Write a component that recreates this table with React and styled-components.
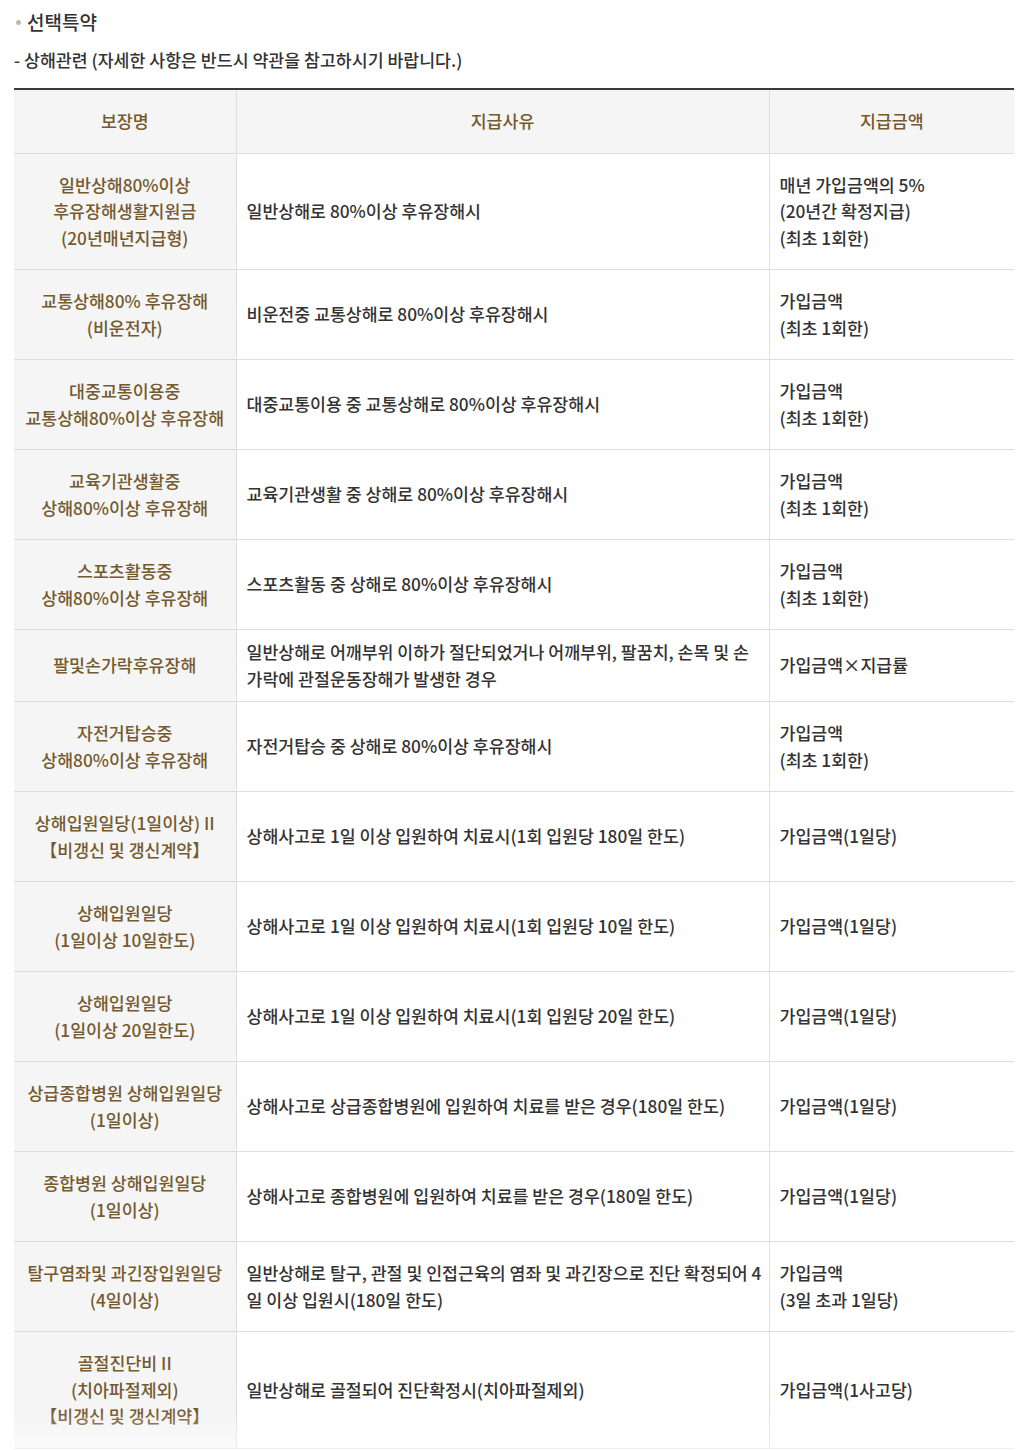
import React from "react";
import styled, { createGlobalStyle } from "styled-components";

const GlobalStyle = createGlobalStyle`
  html, body { margin: 0; padding: 0; background: #fff; }
  body {
    font-family: "Noto Sans CJK KR", "Noto Sans", sans-serif;
    color: #333;
  }
`;

const Page = styled.div`
  width: 1000px;
  margin-left: 14px;
  padding-top: 8px;
`;

const Title = styled.h3`
  margin: 0;
  display: flex;
  align-items: center;
  gap: 6px;
  font-size: 19px;
  line-height: 28px;
  font-weight: 500;
  color: #333;
  &::before {
    content: "";
    width: 5px;
    height: 5px;
    border-radius: 50%;
    background: #c3b9ab;
    margin-left: 2px;
  }
`;

const Sub = styled.p`
  margin: 11px 0 15px;
  font-size: 17.3px;
  line-height: 26px;
  font-weight: 500;
  color: #333;
`;

const Table = styled.table`
  width: 1000px;
  border-collapse: collapse;
  table-layout: fixed;
  border-top: 2px solid #3a3a3a;
  font-size: 17.3px;
  line-height: 26.5px;
  font-weight: 500;
`;

const Th = styled.th`
  background: #f5f5f5;
  color: #745a2e;
  font-weight: 500;
  text-align: center;
  padding: 18px 2px;
  border-bottom: 1px solid #dedede;
  border-right: 1px solid #dedede;
  &:last-child { border-right: none; }
  white-space: nowrap;
`;

const Td = styled.td`
  color: #333;
  text-align: left;
  padding: 9px 10px;
  border-bottom: 1px solid #dedede;
  border-right: 1px solid #dedede;
  &:last-child { border-right: none; }
  vertical-align: middle;
  white-space: nowrap;
`;

const Fade = styled.div`
  position: fixed;
  left: 0;
  right: 0;
  bottom: 0;
  height: 40px;
  background: linear-gradient(rgba(255,255,255,0), rgba(255,255,255,0.55));
  pointer-events: none;
`;

const rows = [
  [["일반상해80%이상", "후유장해생활지원금", "(20년매년지급형)"], ["일반상해로 80%이상 후유장해시"], ["매년 가입금액의 5%", "(20년간 확정지급)", "(최초 1회한)"]],
  [["교통상해80% 후유장해", "(비운전자)"], ["비운전중 교통상해로 80%이상 후유장해시"], ["가입금액", "(최초 1회한)"]],
  [["대중교통이용중", "교통상해80%이상 후유장해"], ["대중교통이용 중 교통상해로 80%이상 후유장해시"], ["가입금액", "(최초 1회한)"]],
  [["교육기관생활중", "상해80%이상 후유장해"], ["교육기관생활 중 상해로 80%이상 후유장해시"], ["가입금액", "(최초 1회한)"]],
  [["스포츠활동중", "상해80%이상 후유장해"], ["스포츠활동 중 상해로 80%이상 후유장해시"], ["가입금액", "(최초 1회한)"]],
  [["팔및손가락후유장해"], ["일반상해로 어깨부위 이하가 절단되었거나 어깨부위, 팔꿈치, 손목 및 손", "가락에 관절운동장해가 발생한 경우"], ["가입금액×지급률"]],
  [["자전거탑승중", "상해80%이상 후유장해"], ["자전거탑승 중 상해로 80%이상 후유장해시"], ["가입금액", "(최초 1회한)"]],
  [["상해입원일당(1일이상) II", "【비갱신 및 갱신계약】"], ["상해사고로 1일 이상 입원하여 치료시(1회 입원당 180일 한도)"], ["가입금액(1일당)"]],
  [["상해입원일당", "(1일이상 10일한도)"], ["상해사고로 1일 이상 입원하여 치료시(1회 입원당 10일 한도)"], ["가입금액(1일당)"]],
  [["상해입원일당", "(1일이상 20일한도)"], ["상해사고로 1일 이상 입원하여 치료시(1회 입원당 20일 한도)"], ["가입금액(1일당)"]],
  [["상급종합병원 상해입원일당", "(1일이상)"], ["상해사고로 상급종합병원에 입원하여 치료를 받은 경우(180일 한도)"], ["가입금액(1일당)"]],
  [["종합병원 상해입원일당", "(1일이상)"], ["상해사고로 종합병원에 입원하여 치료를 받은 경우(180일 한도)"], ["가입금액(1일당)"]],
  [["탈구염좌및 과긴장입원일당", "(4일이상)"], ["일반상해로 탈구, 관절 및 인접근육의 염좌 및 과긴장으로 진단 확정되어 4", "일 이상 입원시(180일 한도)"], ["가입금액", "(3일 초과 1일당)"]],
  [["골절진단비 II", "(치아파절제외)", "【비갱신 및 갱신계약】"], ["일반상해로 골절되어 진단확정시(치아파절제외)"], ["가입금액(1사고당)"]],
];

const Lines = ({ lines }) =>
  lines.map((l, i) => (
    <React.Fragment key={i}>
      {i > 0 && <br />}
      {l}
    </React.Fragment>
  ));

export default function App() {
  return (
    <>
      <GlobalStyle />
      <Page>
        <Title>선택특약</Title>
        <Sub>- 상해관련 (자세한 사항은 반드시 약관을 참고하시기 바랍니다.)</Sub>
        <Table>
          <colgroup>
            <col style={{ width: "222px" }} />
            <col style={{ width: "533px" }} />
            <col style={{ width: "245px" }} />
          </colgroup>
          <thead>
            <tr>
              <Th>보장명</Th>
              <Th>지급사유</Th>
              <Th>지급금액</Th>
            </tr>
          </thead>
          <tbody>
            {rows.map((r, i) => (
              <tr key={i}>
                <Th scope="row"><Lines lines={r[0]} /></Th>
                <Td><Lines lines={r[1]} /></Td>
                <Td><Lines lines={r[2]} /></Td>
              </tr>
            ))}
          </tbody>
        </Table>
      </Page>
      <Fade />
    </>
  );
}
